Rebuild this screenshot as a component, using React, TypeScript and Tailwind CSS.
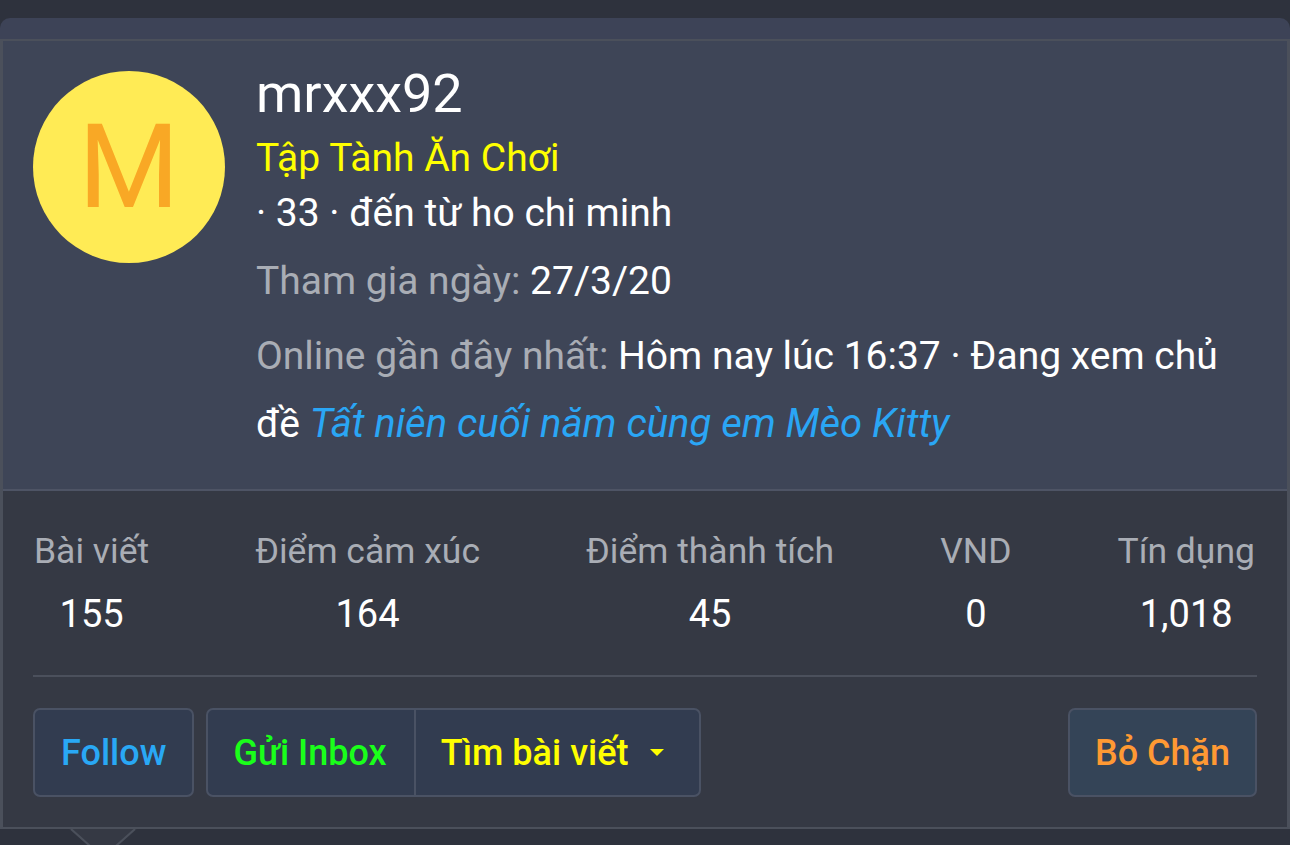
import React from "react";

const stats = [
  { label: "Bài viết", value: "155" },
  { label: "Điểm cảm xúc", value: "164" },
  { label: "Điểm thành tích", value: "45" },
  { label: "VND", value: "0" },
  { label: "Tín dụng", value: "1,018" },
];

function Caret() {
  return (
    <svg width="14" height="7" viewBox="0 0 14 7" className="ml-[22px]">
      <path d="M0 0 H14 L7 7 Z" fill="#ffff00" />
    </svg>
  );
}

export default function App() {
  return (
    <div className="relative w-[1290px] h-[845px] overflow-hidden bg-[#2e323d] pt-[18px] font-['Roboto','Noto_Sans',sans-serif]">
      <div className="h-[21px] rounded-t-[10px] bg-[#3d4357]" />

      <div className="border-x-[3px] border-y-2 border-[#4b505b]">
        {/* header */}
        <div className="flex bg-[#3e4557] pl-[30px] pr-[30px] pt-[22px] pb-[31px] border-b-2 border-[#4e5465]">
          <div className="mt-[8px] w-[192px] h-[192px] shrink-0 rounded-full bg-[#ffeb55] flex items-center justify-center">
            <span className="text-[116px] leading-none text-[#f9a825]">M</span>
          </div>

          <div className="ml-[31px] flex-1 text-white">
            <div className="text-[54px] leading-[62px]">mrxxx92</div>
            <div className="mt-[6px] text-[39px] leading-[55px] text-[#ffff00]">Tập Tành Ăn Chơi</div>
            <div className="text-[39px] leading-[55px]">· 33 · đến từ ho chi minh</div>
            <div className="mt-[13px] text-[39px] leading-[55px]">
              <span className="text-[#a9adb5]">Tham gia ngày: </span>
              27/3/20
            </div>
            <p className="mt-[13px] text-[39px] leading-[68px]">
              <span className="text-[#a9adb5]">Online gần đây nhất: </span>
              Hôm nay lúc 16:37 · Đang xem chủ đề{" "}
              <span className="italic text-[40px] text-[#2aa6f5]">Tất niên cuối năm cùng em Mèo Kitty</span>
            </p>
          </div>
        </div>

        {/* stats + actions */}
        <div className="bg-[#353944] px-[30px] pt-[38px] pb-[30px]">
          <div className="flex justify-between pl-[1px] pr-[2px]">
            {stats.map((s) => (
              <div key={s.label} className="text-center">
                <div className="text-[35.5px] leading-[44px] text-[#a9adb5]">{s.label}</div>
                <div className="mt-[16px] text-[38px] leading-[50px] text-white">{s.value}</div>
              </div>
            ))}
          </div>

          <div className="mt-[36px] h-[2px] bg-[#4b505c]" />

          <div className="mt-[31px] flex justify-between">
            <div className="flex gap-[12px]">
              <button className="h-[89px] px-[26px] rounded-[7px] border-2 border-[#4a5264] bg-[#323c50] text-[36px] font-medium text-[#29a8f5]">
                Follow
              </button>
              <div className="flex h-[89px] rounded-[7px] border-2 border-[#4a5264] bg-[#323c50] overflow-hidden">
                <button className="pl-[25px] pr-[27px] text-[36px] font-medium text-[#1aff1a]">Gửi Inbox</button>
                <button className="flex items-center border-l-2 border-[#4a5264] pl-[25px] pr-[35px] text-[36px] font-medium text-[#ffff00]">
                  Tìm bài viết
                  <Caret />
                </button>
              </div>
            </div>
            <button className="h-[89px] px-[25px] rounded-[7px] border-2 border-[#4a5264] bg-[#344457] text-[36px] font-medium text-[#ff9933]">
              Bỏ Chặn
            </button>
          </div>
        </div>
      </div>

      {/* pointer under the popup */}
      <svg className="absolute left-[69px] top-[829px]" width="68" height="20" viewBox="0 0 68 20">
        <path d="M0 0 L34 30 L68 0 Z" fill="#353944" />
        <path d="M2 0 L34 28.5 L66 0" fill="none" stroke="#4b505b" strokeWidth="2" />
      </svg>
    </div>
  );
}
